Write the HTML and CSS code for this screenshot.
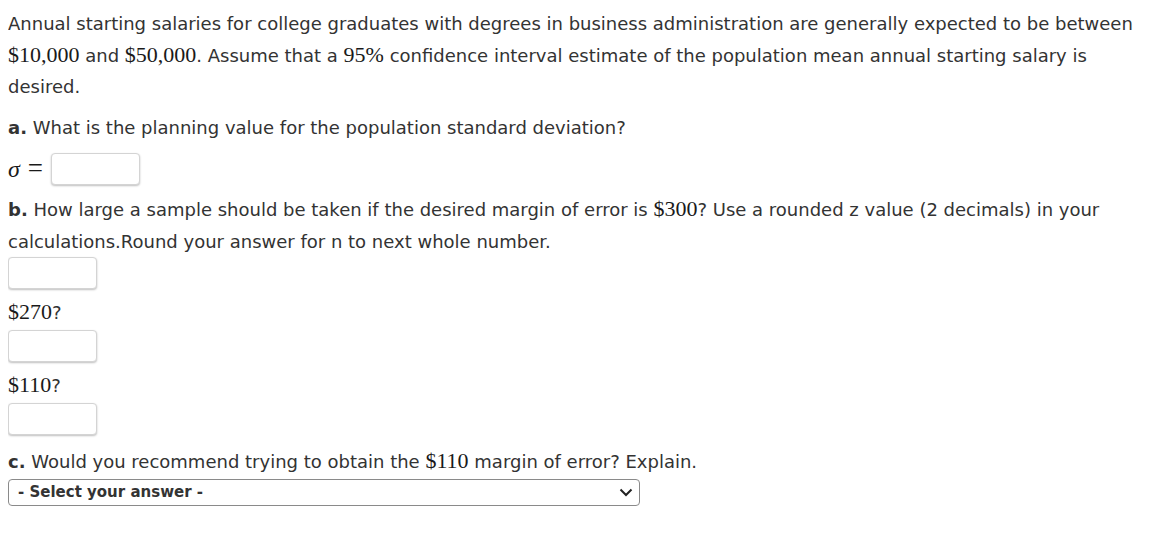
FILE: index.html
```html
<!DOCTYPE html>
<html>
<head>
<meta charset="utf-8">
<link rel="stylesheet" href="styles.css">
</head>
<body>
<div class="q">
  <p class="intro">Annual starting salaries for college graduates with degrees in business administration are generally expected to be between <span class="m">$10,000</span> and <span class="m">$50,000</span>. Assume that a <span class="m">95%</span> confidence interval estimate of the population mean annual starting salary is desired.</p>
  <p class="part"><b>a.</b> What is the planning value for the population standard deviation?</p>
  <div class="sigma-row"><span class="m sig">σ</span><span class="m eq">=</span><span class="inp"></span></div>
  <p class="part"><b>b.</b> How large a sample should be taken if the desired margin of error is <span class="m">$300</span>? Use a rounded z value (2 decimals) in your calculations.Round your answer for n to next whole number.</p>
  <span class="inp block first"></span>
  <p class="sub"><span class="m">$270</span>?</p>
  <span class="inp block"></span>
  <p class="sub"><span class="m">$110</span>?</p>
  <span class="inp block"></span>
  <p class="part c"><b>c.</b> Would you recommend trying to obtain the <span class="m">$110</span> margin of error? Explain.</p>
  <div class="sel"><span>- Select your answer -</span><svg width="14" height="9" viewBox="0 0 14 9"><path d="M1.5 1.5 L7 7 L12.5 1.5" fill="none" stroke="#222" stroke-width="2"/></svg></div>
</div>
</body>
</html>
```
FILE: styles.css
```css
body { margin: 8px; background: #fff; font-family: "DejaVu Sans", Verdana, sans-serif; font-size: 18px; color: #333; }
.q { width: 1135px; }
p { margin: 0; line-height: 31.5px; }
.intro { margin-top: 0; }
.m { font-family: "Liberation Serif", "Times New Roman", serif; font-size: 22px; line-height: 1; color: #1a1a1a; }
.part { margin-top: 9px; }
b { font-weight: bold; }
.sigma-row { display: flex; align-items: center; margin-top: 9px; height: 33px; }
.sig { font-style: italic; font-size: 24px; margin-right: 8px; }
.eq { font-size: 27px; margin-right: 8px; }
.inp { display: inline-block; width: 87px; height: 30px; border: 1px solid #d4d4d4; border-radius: 4px; box-shadow: 0 1px 2px rgba(0,0,0,0.25); background: #fff; }
.block { display: block; margin-top: 1px; }
.block.first { margin-top: 0; }
.sub { margin-top: 8px; line-height: 32px; }
.c { margin-top: 11px; }
.sel { width: 615px; height: 25px; margin-top: 1px; border: 1px solid #8a8a8a; border-radius: 4px; display: flex; align-items: center; justify-content: space-between; padding: 0 6px 0 9px; font-family: "DejaVu Sans", Verdana, sans-serif; font-weight: bold; font-size: 15px; color: #333; }
```
